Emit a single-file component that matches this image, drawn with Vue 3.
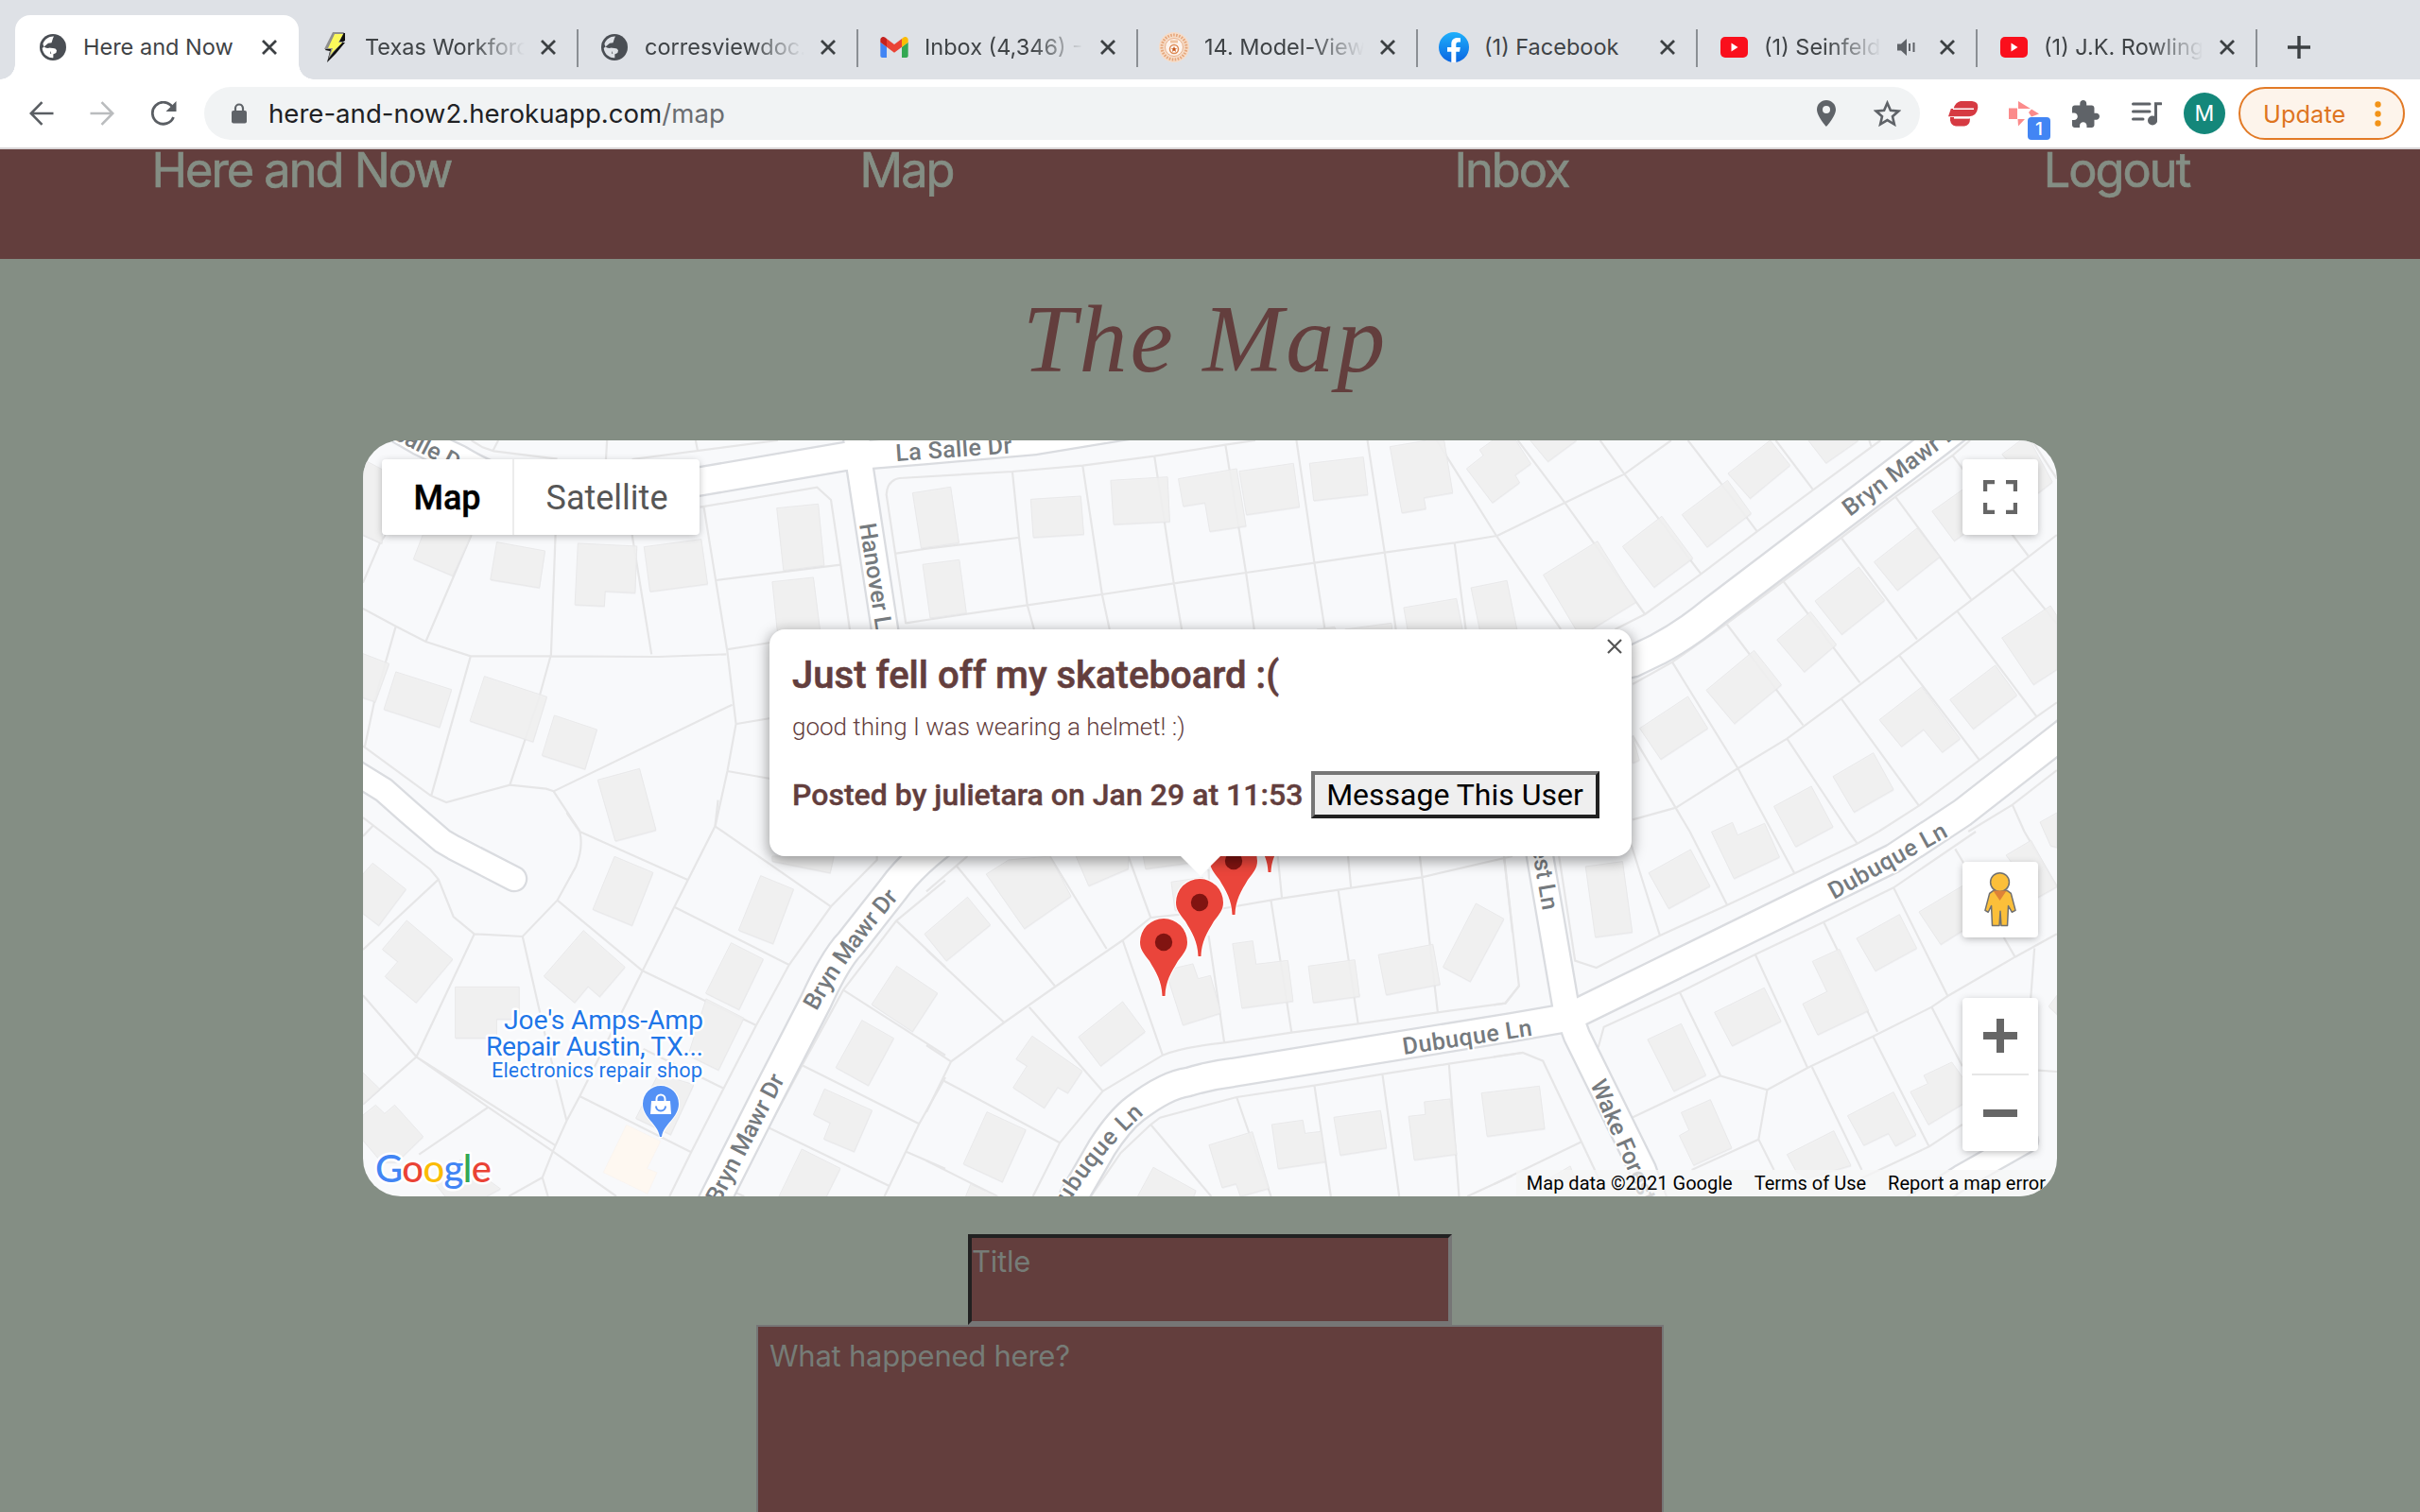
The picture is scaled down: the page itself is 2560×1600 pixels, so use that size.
<script setup>
const tabs = [
  { icon: 'globe', title: 'Here and Now', active: true },
  { icon: 'bolt', title: 'Texas Workforc' },
  { icon: 'globe', title: 'corresviewdoc.' },
  { icon: 'gmail', title: 'Inbox (4,346) -' },
  { icon: 'seal', title: '14. Model-View' },
  { icon: 'facebook', title: '(1) Facebook' },
  { icon: 'youtube', title: '(1) Seinfeld', audio: true },
  { icon: 'youtube', title: '(1) J.K. Rowling' },
]

const links = ['Here and Now', 'Map', 'Inbox', 'Logout']

// Each tile is digitised on its own grid, then scaled on to the map.
const tiles = [
  {
    x: -4, y: -6,
    lots: 'M300 18L330 40 360 52 530 77M372 18L358 50M663 18L660 78M900 18L905 48M730 78L1120 18M912 230L1225 167 1262 207 1288 413 1315 640M922 230L985 690 1008 918 985 1068 952 1245M955 462L1288 413M982 682L1100 660M1010 918L1100 900M985 1068L1100 1092M998 857L520 1132 590 1258M730 318L782 697M525 318L513 703M10 552L98 608 178 657 298 703 513 703 800 705 982 697M300 318L178 657M70 318L55 345 10 470M10 318L60 345M98 608L40 850 15 990M10 988L190 1145 233 1167 403 1112 500 1124 520 1132M298 703L193 1145M512 703L480 840 403 1112',
    houses: ['10,78 61,110 61,345 10,318', '170,318 300,318 250,448 145,395', '368,341 497,369 482,486 351,460', '585,345 743,354 738,502 658,497 656,544 577,540', '762,356 915,332 932,474 778,498', '1117,233 1228,220 1244,415 1135,431', '1105,467 1215,453 1235,640 1120,640', '10,695 80,727 43,848 10,835', '98,753 247,809 215,929 66,872', '335,767 502,832 465,975 296,909', '522,891 636,936 604,1062 489,1018', '638,1096 750,1060 794,1255 685,1290'],
  },
  {
    x: -4, y: 394,
    lots: 'M10 15L190 180 212 212 252 330 308 385 437 393 530 278 580 170Q600 110 590 60L555 0M590 60L877 212M960 -40L952 43 843 299 758 502 590 900 555 978 518 1075 490 1158 505 1218M952 43L1262 298M843 299L1150 483M1385 138L1385 150 1262 298 1150 483 1062 675 975 875 888 1078 830 1218M758 502L1062 675M530 278L758 502M437 393L500 720 555 978M212 212L10 435M308 385L153 775 10 925M10 580L153 775 345 935 160 1085M153 775L523 1055M518 1075L688 1218M345 935L518 1075M490 1158L400 1218M590 900L888 1078M760 750L975 875M10 75L38 40M1568 215L1437 343 1295 563 1185 802 1095 1000 1000 1218M1437 343L1568 490M1295 563L1568 770M1185 802L1498 988M1095 1000L1418 1185M1568 840L1498 988 1405 1218M1465 1077L1568 1130M1005 1205L1030 1218',
    houses: ['36,160 125,243 52,358 10,320 10,195', '127,342 250,465 152,603 69,520 103,473 62,434', '257,553 428,553 428,655 368,655 368,715 257,715', '683,139 786,190 730,358 625,307', '600,374 711,490 643,584 612,552 576,603 494,519', '1074,200 1162,243 1107,416 1015,373', '995,413 1081,465 1016,625 927,573', '928,591 1029,652 961,817 880,770', '1105,138 1270,138 1260,191 1105,154', '800,830 895,863 833,1022 740,970', '10,825 55,877 10,925', '44,928 68,955 95,928 171,1028 100,1110 60,1110 10,1040 10,960', '205,1180 270,1102 378,1194 340,1218 230,1218', '1438,487 1547,573 1480,695 1371,609', '1345,659 1430,716 1362,866 1275,809', '1245,877 1372,945 1324,1076 1243,1036 1260,985 1215,958', '1184,1068 1287,1129 1250,1218 1123,1218'],
    shop: '715,991 806,1043 770,1130 797,1142 771,1210 653,1142',
  },
  {
    x: 596, y: -6,
    lots: 'M-55 600L-107 190Q-105 145 -72 138L230 117 418 98 610 68 800 32 880 18M-81 377L0 362 245 327M-55 598L0 588M230 117L248 327 270 541 288 618M418 98L470 507 490 618M610 68L662 472 683 618M800 32L855 438 877 618M990 18L1038 407 1066 618M1180 18L1226 374 1256 618M0 588L270 541 470 507 662 472 855 438 1038 407 1226 374 1413 343 1525 321M1413 343L1443 618M1365 18L1525 321',
    houses: ['-37,185 65,166 87,343 -14,360', '-10,412 88,397 107,566 10,582', '279,205 413,195 421,316 286,326', '493,145 645,134 651,276 501,285', '674,140 830,108 855,290 758,307 745,216 687,227', '837,116 982,91 998,229 856,254', '1025,91 1169,71 1181,190 1036,209', '1240,38 1340,18 1385,18 1408,184 1331,200 1336,235 1272,248', '1445,108 1490,66 1480,48 1515,18 1577,18 1617,92 1575,128 1587,152 1514,216', '1457,486 1553,463 1580,618 1480,618', '1277,549 1418,520 1434,618 1287,618', '1120,618 1244,598 1246,618', '1045,618 1092,610 1095,618'],
  },
  {
    x: 596, y: 394,
    lots: 'M0 250L110 138M80 168L345 552M330 138L482 432M540 138L600 333 740 315M1568 138L1325 205 950 272 740 315M600 333L525 405 345 552 208 666 66 790 42 848 0 950M0 435L208 666M0 738L66 790M42 848L357 1048M0 1105L190 1218M275 617L472 884M525 405L632 770M755 180L760 310M755 390L797 730M922 280L977 698M940 138L951 270M1128 138L1136 238M1102 248L1155 670M1320 138L1368 634M1545 138L1568 380M285 1218L357 1048 472 884 632 770Q680 745 797 730L977 698 1155 670 1368 634 1548 605 1585 550M440 1218L520 1080 600 990 625 968 830 903 1038 866 1220 830 1398 797 1595 762M600 990L762 1218M830 903L922 1218M1038 866L1082 1218M1220 830L1265 1218M1398 797L1425 1218M1447 1218L1568 1152',
    houses: ['110,268 171,356 53,470 -5,385', '220,150 330,138 387,265 262,368 160,195', '400,138 540,138 540,178 434,232', '580,138 700,138 700,160 586,178', '655,220 740,205 740,300 665,310', '650,540 640,500 713,480 727,527 760,517 788,636 686,674', '819,416 873,407 882,481 967,469 981,598 844,620', '1022,487 1146,467 1159,583 1035,603', '1209,451 1355,418 1374,545 1230,578', '1470,288 1545,337 1455,536 1382,490', '525,600 585,695 466,804 407,712', '283,709 417,820 378,890 351,872 315,937 232,873 269,804 240,782', '162,950 266,1007 203,1172 99,1115', '118,1180 190,1218 105,1218', '607,1126 721,1200 715,1218 565,1218', '756,1055 872,1013 917,1192 840,1218 828,1178 791,1190', '924,990 1007,976 1013,1018 1056,1012 1067,1108 941,1130', '1090,967 1215,946 1231,1064 1107,1087', '1332,918 1401,909 1419,1084 1305,1102 1290,964 1335,958', '1485,890 1640,868 1654,1003 1500,1027'],
  },
  {
    x: 1196, y: -6,
    lots: 'M8 322L192 215 350 125 475 18M65 18L190 215 405 570M285 18L350 125 555 442M520 18L612 160 705 307M755 18L855 175M1005 18L1010 36M325 618L405 570 555 442 705 307 855 175 1035 18M8 322L180 618M372 792L478 722 623 600 775 465 930 327 1075 197 1228 66 1275 18M478 722L655 1062 745 1260M623 600L828 922M775 465L980 787M930 327L1133 650M1075 197L1277 522M1228 66L1430 384M372 1222L488 1184 650 1062 785 965 930 838 1085 700 1240 560 1388 427 1507 318M372 955L525 1260M785 965L950 1260M930 838L1138 1178M1085 700L1300 1033M1240 560L1453 895M1388 427L1507 600M1440 18L1507 140M1030 1260L1138 1178 1300 1033 1453 895 1507 850M1270 1260L1388 1175 1507 1065M1388 1175L1420 1260',
    houses: ['98,18 222,18 145,85', '740,18 793,97 686,202 627,123', '842,18 976,18 889,90', '626,145 689,250 571,357 504,254', '450,259 533,392 429,484 345,355', '278,338 380,532 262,618 220,618 133,445', '1360,62 1410,18 1435,18 1495,150 1457,185', '1254,175 1173,243 1232,337 1300,280', '1133,297 1193,388 1080,494 1018,404', '977,420 1046,526 931,634 860,528', '848,562 917,666 831,753 758,651', '697,685 770,794 644,917 569,811', '520,831 573,932 447,1030 391,932', '1145,801 1248,965 1200,1008 1150,936 1091,990 1032,905', '1342,732 1400,827 1283,934 1221,841', '1490,543 1507,575 1507,745 1444,793 1360,645', '1016,1010 1070,1126 964,1198 908,1085', '850,1116 908,1245 808,1308 750,1180', '372,960 390,1033 372,1042'],
  },
  {
    x: 1196, y: 394,
    lots: 'M365 90L445 390M525 60L625 293M745 60L805 193M950 60L973 98M175 138L218 470 275 492 445 390 625 293 805 193 973 98 1030 60M28 138L68 550 32 605 0 610M1290 60L1070 238 883 347 700 450 498 570 295 680 280 745M1235 115L1260 165M1420 60L1507 235M883 347L1027 695M700 450L840 810M498 570L607 835M1070 238L1215 582M1365 396L1395 458M370 968L607 835 732 880 840 810 1015 710 1172 617 1215 582 1395 458 1507 385M1447 430L1437 590M1172 617L1254 805M1015 710L1165 1060M852 808L985 1134M732 880L709 1037 750 1134M530 1134L709 1037M985 1160L1165 1060 1254 990M1457 818L1507 822M0 775L78 762 132 788 235 1045 285 1170M235 1045L0 1180',
    houses: ['639,31 653,71 725,34 765,141 643,209 583,61', '527,117 579,233 468,304 415,191', '246,171 345,155 371,379 272,395', '1438,88 1507,235 1457,268 1371,135', '1300,200 1138,315 1196,418 1300,340', '1086,323 1132,430 1021,502 971,399', '925,433 1003,628 867,705 827,607 892,568 853,472', '724,556 769,662 638,740 591,634', '502,670 568,833 482,884 412,720', '580,911 637,1064 535,1119 497,1025 523,1008 502,952', '910,1010 956,1120 840,1160 810,1140 785,1085', '1070,887 1130,1023 1075,1058 1056,1018 990,1056 947,962', '1226,792 1290,900 1163,990 1115,886 1162,860 1151,834', '1462,30 1507,0 1507,110 1490,105', '1507,580 1485,615 1507,640', '150,1160 205,1122 225,1180'],
  },
]

const roads = [
  { w: 28, d: 'M-20 -46L59 0 101 20Q150 50 210 57 270 60 353 44L510 17 596 10 711 0 820 -18' },
  { w: 26, d: 'M522 -4L526 31 552 200 565 300' },
  { w: 31, d: 'M368 812L374 800 426 697 479 594Q500 548 516 532L560 476Q586 440 640 405L1343 234 1370 221Q1400 205 1429 181L1667 0 1690 -18' },
  { w: 28, d: 'M746 814L752 800 782 748Q800 720 817 707 850 682 873 679 895 672 920 669L1216 621 1274 611 1619 442 1692 394 1810 302' },
  { w: 26, d: 'M1225 310L1245 440 1272 597 1284 630 1354 772 1366 806' },
  { w: 24, d: 'M-20 343L-4 354 22 370 49 394 84 424 96 431 160 464' },
  { w: 24, d: 'M1640 812L1690 780 1759 741' },
]

const streetLabels = [
  { at: 'translate(29 -3) rotate(27)', text: 'Salle Dr' },
  { at: 'translate(564 22) rotate(-4)', text: 'La Salle Dr', len: 123 },
  { at: 'translate(525 89) rotate(81)', text: 'Hanover Ln' },
  { at: 'translate(377 809) rotate(-62.5)', text: 'Bryn Mawr Dr', len: 150 },
  { at: 'translate(1573 81) rotate(-37)', text: 'Bryn Mawr Dr', len: 154 },
  { at: 'translate(1101 650) rotate(-8.5)', text: 'Dubuque Ln', len: 138 },
  { at: 'translate(1556 486) rotate(-29)', text: 'Dubuque Ln', len: 139 },
  { at: 'translate(1298 681) rotate(66.5)', text: 'Wake Forest Ln' },
]
</script>

<template>
  <div class="screen">
    <header class="tabstrip">
      <div v-for="(t, i) in tabs" :key="i" class="tab" :class="{ active: t.active }">
        <span class="favicon">
          <svg v-if="t.icon === 'globe'" width="28" height="28" viewBox="0 0 28 28">
            <circle cx="14" cy="14" r="14" fill="#4a4e54" />
            <g :fill="t.active ? '#fff' : '#dee1e6'">
              <path d="M15 2.600C10 2.300 5 5.500 3.400 10.500 4 14 7 15.500 10 15L13 17.800H11V20.500L14.200 21.500V25.200C10 25.500 3.500 22.500 2.700 15L9 9.800 12.500 9.200C13.500 7 13.500 5 15 2.600Z" />
              <path d="M14.200 21.600C17.500 20.500 18.500 17.500 16.500 15.600L13 15 14 18ZM14.200 25.200V21.400L17.300 20 18 17.500C17.500 15.800 16 15 14 15L9.500 14.500" />
            </g>
          </svg>
          <svg v-else-if="t.icon === 'bolt'" width="24" height="34" viewBox="0 0 24 34">
            <path d="M11 2H23V10L20 12H23L13 24 4 33 7 21 2 20 7 11Z" fill="#111" />
            <path d="M10 1H22L17 11H21L11 22 5 30 8 19H1Z" fill="#8f8f8f" />
            <path d="M12 3H21L16 12H20L10 22 7 26 10 18H5Z" fill="#fbf95a" />
          </svg>
          <svg v-else-if="t.icon === 'gmail'" width="30" height="22" viewBox="52 42 88 66">
            <path fill="#4285f4" d="M58 108h14V74L52 59v43c0 3.320 2.690 6 6 6" />
            <path fill="#34a853" d="M120 108h14c3.320 0 6-2.690 6-6V59l-20 15" />
            <path fill="#fbbc04" d="M120 48v26l20-15v-8c0-7.420-8.470-11.650-14.400-7.200" />
            <path fill="#ea4335" d="M72 74V48l24 18 24-18v26L96 92" />
            <path fill="#c5221f" d="M52 51v8l20 15V48l-5.600-4.200c-5.940-4.450-14.400-.22-14.400 7.200" />
          </svg>
          <svg v-else-if="t.icon === 'seal'" width="32" height="32" viewBox="0 0 32 32">
            <circle cx="16" cy="16" r="16" fill="#f6dcc8" />
            <circle cx="16" cy="16" r="13" fill="none" stroke="#e6a67a" stroke-width="3" stroke-dasharray="1.600 1.400" />
            <circle cx="16" cy="16" r="9.500" fill="#fdf3ec" stroke="#e9b18b" />
            <path d="M12 8.500H20V11.500H12Z" fill="#efc3a1" />
            <circle cx="16" cy="18" r="4.500" fill="#fff" stroke="#dd8a54" stroke-width="1.500" />
            <path d="M16 15l1 2.200h2.200l-1.800 1.400.7 2.300-2.100-1.400-2.100 1.400.7-2.300-1.800-1.400H15Z" fill="#c8581a" />
          </svg>
          <svg v-else-if="t.icon === 'facebook'" width="32" height="32" viewBox="0 0 32 32">
            <defs><linearGradient id="fb" x1="0" y1="0" x2="0" y2="1"><stop offset="0" stop-color="#1fb0fb" /><stop offset="1" stop-color="#0a65e2" /></linearGradient></defs>
            <circle cx="16" cy="16" r="16" fill="url(#fb)" />
            <path d="M13.300 32V20.800H9V16H13.300V12.500C13.300 8.200 15.800 6 19.600 6 21.400 6 23 6.300 23 6.300V10.400H21C18.900 10.400 18.300 11.700 18.300 13V16H22.800L22 20.800H18.300V32Z" fill="#fff" />
          </svg>
          <svg v-else width="29" height="22" viewBox="0 0 29 22">
            <rect width="29" height="22" rx="5" fill="#fa0f1c" /><path d="M11.500 6.500L18.500 11 11.500 15.500Z" fill="#fff" />
          </svg>
        </span>
        <span class="tab-title">{{ t.title }}</span>
        <svg v-if="t.audio" class="speaker" width="19" height="18" viewBox="0 0 19 18">
          <path d="M0 5.500H4L10 0V18L4 12.500H0Z" fill="#5f6368" /><path d="M13 5V13M17.500 4V14" stroke="#5f6368" stroke-width="2" />
        </svg>
        <svg class="close" width="18" height="18" viewBox="0 0 18 18"><path d="M2 2L16 16M16 2L2 16" stroke="#3c4043" stroke-width="2.800" /></svg>
      </div>
      <svg class="plus" width="24" height="24" viewBox="0 0 24 24"><path d="M12 0V24M0 12H24" stroke="#3c4043" stroke-width="3.400" /></svg>
    </header>

    <div class="toolbar">
      <svg width="26" height="26" viewBox="0 0 26 26"><path d="M13.500 1.200L1.800 13 13.500 24.800M2 13H25.500" fill="none" stroke="#5a5e63" stroke-width="2.600" /></svg>
      <svg width="26" height="26" viewBox="0 0 26 26"><path d="M12.500 1.200L24.200 13 12.500 24.800M24 13H.5" fill="none" stroke="#babcbe" stroke-width="2.600" /></svg>
      <svg width="28" height="26" viewBox="0 0 28 26"><path d="M23.500 6.500A11.500 11.500 0 1 0 24.500 17" fill="none" stroke="#5a5e63" stroke-width="2.800" /><path d="M27.500 0V11H16.500Z" fill="#5a5e63" /></svg>
      <div class="omnibox">
        <svg width="16" height="22" viewBox="0 0 16 22"><rect y="8" width="16" height="13.500" rx="2" fill="#5f6368" /><path d="M4 9V5.500A4 4 0 0 1 12 5.500V9" fill="none" stroke="#5f6368" stroke-width="2.200" /></svg>
        <span class="url">here-and-now2.herokuapp.com<i>/map</i></span>
        <svg class="pin" width="20" height="28" viewBox="0 0 20 28"><path fill-rule="evenodd" d="M10 0C4.400 0 0 4.400 0 10 0 17 10 28 10 28S20 17 20 10C20 4.400 15.600 0 10 0ZM10 6A4 4 0 1 1 10 14 4 4 0 1 1 10 6Z" fill="#5f6368" /></svg>
        <svg width="29" height="28" viewBox="0 0 29 28"><path d="M14.500 3L17.900 10.800 26.400 11.600 20 17.200 21.900 25.500 14.500 21.100 7.100 25.500 9 17.200 2.600 11.600 11.100 10.800Z" fill="none" stroke="#5f6368" stroke-width="2.600" /></svg>
      </div>
      <svg class="ext red" width="32" height="27" viewBox="0 0 32 27">
        <path d="M13 0H25Q32 .5 31.300 7 30 16 22 16.300H0L2.800 8H5.500Q7.500 1 13 0Z" fill="#d63a42" />
        <path d="M2 18.500H23Q23 26 17 26.500H8Q2 26 2 18.500Z" fill="#d63a42" />
        <path d="M5 8.200H27M3.500 17.500H22" stroke="#fff" stroke-width="1.400" />
        <path d="M2 17H6V21H2Z" fill="#d63a42" />
      </svg>
      <div class="ext badge-host">
        <svg width="33" height="27" viewBox="0 0 33 27"><path d="M10 0L23 8H10ZM0 7.500H9V19H0ZM9.500 19H17L10 26.500ZM24 8.500L32 13.500 24 16.500 21 12Z" fill="#fb8b8b" /></svg>
        <b class="badge">1</b>
      </div>
      <svg class="ext puzzle" width="29" height="29" viewBox="2 1 21 21"><path d="M20.500 11H19V7c0-1.100-.9-2-2-2h-4V3.500C13 2.120 11.880 1 10.500 1S8 2.120 8 3.500V5H4c-1.100 0-1.990.9-1.990 2v3.800H3.500c1.490 0 2.700 1.210 2.700 2.700s-1.210 2.700-2.700 2.700H2V20c0 1.100.9 2 2 2h3.800v-1.500c0-1.490 1.210-2.700 2.700-2.700 1.490 0 2.700 1.210 2.700 2.700V22H17c1.100 0 2-.9 2-2v-4h1.500c1.380 0 2.500-1.120 2.500-2.500S21.880 11 20.500 11z" fill="#5f6368" /></svg>
      <svg class="ext" width="32" height="25" viewBox="0 0 32 25"><path d="M1.500 2H19M1.500 10H19M1.500 18H12" stroke="#5f6368" stroke-width="3" stroke-linecap="round" /><path d="M25.500 20V1.800H31" fill="none" stroke="#5f6368" stroke-width="3" stroke-linecap="round" /><circle cx="22" cy="19.500" r="5" fill="#5f6368" /></svg>
      <span class="avatar">M</span>
      <span class="update">Update<svg width="7" height="27" viewBox="0 0 7 27"><g fill="#f29318"><circle cx="3.500" cy="3.500" r="3.200" /><circle cx="3.500" cy="13.500" r="3.200" /><circle cx="3.500" cy="23.500" r="3.200" /></g></svg></span>
    </div>

    <main class="page">
      <nav class="nav"><a v-for="l in links" :key="l">{{ l }}</a></nav>
      <h1>The Map</h1>

      <section class="map">
        <svg class="canvas" width="1792" height="800" viewBox="0 0 1792 800">
          <defs>
            <path id="mawr" d="M480 604Q510 548 571 479" />
            <path id="dub" d="M727 847Q757 775 827 712" />
            <g id="marker">
              <path d="M23.500 82C23 66 17 57 10 45 4 37 0 33 0 25A25 25 0 0 1 50 25C50 33 46 37 40 45 33 57 27 66 26.500 82Z" fill="#ea453b" stroke="#fff" stroke-width="2" paint-order="stroke" />
              <circle cx="25" cy="25" r="9.200" fill="#811411" />
            </g>
          </defs>
          <g v-for="(t, i) in tiles" :key="i" :transform="`translate(${t.x} ${t.y}) scale(.39541 .33333)`">
            <path class="lots" :d="t.lots" />
            <polygon v-for="h in t.houses" :key="h" class="house-edge" :points="h" transform="translate(1 4)" />
            <polygon v-for="h in t.houses" :key="h + 'f'" class="house" :points="h" />
            <polygon v-if="t.shop" :points="t.shop" fill="#fef8f1" stroke="#f6efe8" />
          </g>
          <g class="casing"><path v-for="r in roads" :key="r.d" :d="r.d" :stroke-width="r.w + 4.6" /></g>
          <g class="surface"><path v-for="r in roads" :key="r.d" :d="r.d" :stroke-width="r.w" /></g>

          <g class="street">
            <text v-for="(s, i) in streetLabels" :key="i" :transform="s.at" :textLength="s.len">{{ s.text }}</text>
            <text textLength="149"><textPath href="#mawr">Bryn Mawr Dr</textPath></text>
            <text text-anchor="end" letter-spacing="1"><textPath href="#dub" startOffset="100%">Dubuque Ln</textPath></text>
            <text text-anchor="end" transform="translate(1248 498) rotate(80)">Wake Forest Ln</text>
          </g>

          <g class="poi" text-anchor="end">
            <text x="360" y="623" textLength="211">Joe's Amps-Amp</text>
            <text x="360" y="651" textLength="230">Repair Austin, TX...</text>
            <text x="359" y="674" textLength="223" class="kind">Electronics repair shop</text>
          </g>
          <g transform="translate(296 683)">
            <path d="M18 54C16 40 0 34 0 19A19 19 0 0 1 38 19C38 34 22 40 20 54Z" fill="#5491f5" stroke="#fff" stroke-width="2" paint-order="stroke" />
            <path d="M9 16H29L30 30H8Z" fill="#fff" /><path d="M14.500 17V14A4.500 4.500 0 0 1 23.500 14V17" fill="none" stroke="#fff" stroke-width="2" /><path d="M14 21.500A5 5 0 0 0 24 21.500" fill="none" stroke="#5491f5" stroke-width="2" />
          </g>

          <path d="M957.500 457C957 449 956 445 953 438H965C962 445 961 449 960.500 457Z" fill="#ea453b" stroke="#fff" stroke-width="2" paint-order="stroke" />
          <g>
            <use href="#marker" x="896" y="420" />
            <use href="#marker" x="860" y="464" />
            <use href="#marker" x="822" y="506" />
          </g>
          <text class="google" x="13" y="785" textLength="123"><tspan fill="#4285f4">G</tspan><tspan fill="#ea4335">o</tspan><tspan fill="#fbbc05">o</tspan><tspan fill="#4285f4">g</tspan><tspan fill="#34a853">l</tspan><tspan fill="#ea4335">e</tspan></text>
        </svg>

        <div class="types"><b>Map</b><span>Satellite</span></div>
        <div class="ctl fullscreen">
          <svg width="36" height="36" viewBox="0 0 36 36"><path d="M2 12V2H12M24 2H34V12M34 24V34H24M12 34H2V24" fill="none" stroke="#666" stroke-width="4.400" /></svg>
        </div>
        <div class="ctl pegman">
          <svg width="34" height="62" viewBox="0 0 36 62">
            <path d="M10 21H26L30 24 35 43 31 45 27 38 26 60H19L18 44 17 60H9L8 38 4.500 45 1 43 6 24Z" fill="#fbbf3a" stroke="#707070" stroke-width="1.600" stroke-linejoin="round" />
            <circle cx="17.500" cy="11.500" r="10.500" fill="#fbbf3a" stroke="#707070" stroke-width="1.600" />
            <path d="M10 21H25L17.500 32Z" fill="#de8237" />
          </svg>
        </div>
        <div class="ctl zoom">
          <svg width="36" height="36" viewBox="0 0 36 36"><path d="M14 0H22V14H36V22H22V36H14V22H0V14H14Z" fill="#666" /></svg>
          <hr>
          <svg width="36" height="36" viewBox="0 0 36 36"><path d="M0 14H36V22H0Z" fill="#666" /></svg>
        </div>
        <div class="legal"><span>Map data ©2021 Google</span><span>Terms of Use</span><span>Report a map error</span></div>

        <article class="popup">
          <svg class="dismiss" width="16" height="16" viewBox="0 0 16 16"><path d="M1 1L15 15M15 1L1 15" stroke="#555" stroke-width="2.200" /></svg>
          <h2>Just fell off my skateboard :(</h2>
          <p>good thing I was wearing a helmet! :)</p>
          <div class="posted"><h3>Posted by julietara on Jan 29 at 11:53</h3><button>Message This User</button></div>
          <svg class="tail" width="44" height="22" viewBox="0 0 44 22"><path d="M0 0H44L22 22Z" fill="#fff" /></svg>
        </article>
      </section>

      <form>
        <div class="title-input">Title</div>
        <div class="body-input">What happened here?</div>
      </form>
    </main>
  </div>
</template>

<style>
body { margin: 0; }
</style>

<style scoped>
* { box-sizing: border-box; }
.screen { width: 2560px; height: 1600px; overflow: hidden; display: flex; flex-direction: column; background: #848e84; font-family: Inter, "Liberation Sans", sans-serif; }
svg { display: block; flex: none; }

.tabstrip { height: 84px; flex: none; display: flex; align-items: flex-end; padding-left: 16px; background: #dee1e6; }
.tab { position: relative; width: 296px; height: 68px; display: flex; align-items: center; padding: 0 22px 0 23px; flex: none; }
.tab::after { content: ""; position: absolute; right: -1px; top: 15px; width: 2px; height: 40px; background: #8b8f94; }
.tab.active { width: 300px; margin-right: -1px; padding-left: 24px; background: #fff; border-radius: 16px 16px 0 0; }
.tab.active::after { top: auto; bottom: 0; right: -16px; width: 16px; height: 16px; background: radial-gradient(circle at 100% 0, transparent 15.5px, #fff 16px); }
.tab.active::before { content: ""; position: absolute; bottom: 0; left: -16px; width: 16px; height: 16px; background: radial-gradient(circle at 0 0, transparent 15.5px, #fff 16px); }
.favicon { width: 32px; display: flex; justify-content: center; flex: none; }
.tab-title { margin-left: 16px; flex: 1; min-width: 0; overflow: hidden; white-space: nowrap; font-size: 23.5px; line-height: 34px; color: #3f4346; -webkit-mask-image: linear-gradient(to right, #000 calc(100% - 56px), transparent); mask-image: linear-gradient(to right, #000 calc(100% - 56px), transparent); }
.tab.active .tab-title, .tab:nth-child(6) .tab-title { -webkit-mask-image: none; mask-image: none; }
.speaker { margin-left: 16px; }
.close { margin-left: 16px; }
.speaker + .close { margin-left: 25px; }
.plus { margin: 0 0 22px 33px; }

.toolbar { height: 74px; flex: none; display: flex; align-items: center; padding: 0 16px 0 31px; background: #fff; border-bottom: 2px solid #d9d5d7; }
.toolbar > svg:nth-child(2) { margin-left: 38px; }
.toolbar > svg:nth-child(3) { margin-left: 38px; }
.omnibox { width: 1815px; height: 56px; margin-left: 29px; padding: 0 20px 0 29px; border-radius: 28px; background: #f1f3f4; display: flex; align-items: center; flex: none; }
.url { margin-left: 23px; font-size: 27.6px; line-height: 34px; color: #202124; white-space: nowrap; }
.url i { font-style: normal; color: #6a6d71; }
.pin { margin: 0 40px 0 auto; }
.ext { flex: none; margin-left: 34px; }
.ext.red { margin-left: 30px; }
.badge-host { position: relative; margin-left: 32px; }
.badge { position: absolute; left: 20px; top: 17px; width: 24px; height: 24px; border-radius: 4px; background: #4285f4; color: #fff; font: 500 19px/25px Inter, sans-serif; text-align: center; }
.avatar { width: 44px; height: 44px; margin-left: auto; border-radius: 50%; background: #14877a; color: #fff; font-size: 23px; line-height: 44px; text-align: center; flex: none; }
.update { width: 176px; height: 56px; margin-left: 14px; padding: 0 23px 0 24px; border: 2px solid #e27a26; border-radius: 28px; background: #fdf4eb; color: #de7420; font-size: 25.3px; letter-spacing: .1px; display: flex; align-items: center; justify-content: space-between; flex: none; }

.page { display: flex; flex-direction: column; align-items: center; }
.nav { width: 2560px; height: 116px; background: #633e3d; display: flex; }
.nav a { width: 640px; text-align: center; font-size: 50.5px; line-height: 60px; margin-top: -8px; letter-spacing: -2px; text-indent: -2px; color: #848e84; -webkit-text-stroke: .7px #848e84; }
h1 { height: 192px; margin: 0; padding-top: 30px; font: italic 400 102px/110px "Liberation Serif", serif; letter-spacing: 3px; color: #633e3d; transform: translateX(-5px); }

.map { position: relative; width: 1792px; height: 800px; border-radius: 40px; overflow: hidden; background: #f8f9fb; font-family: Roboto, sans-serif; }
.lots { fill: none; stroke: #e6e6e7; stroke-width: 2.200px; vector-effect: non-scaling-stroke; }
.house { fill: #f0f0f0; fill-opacity: .85; stroke: #e9e9ea; stroke-width: 1px; vector-effect: non-scaling-stroke; }
.house-edge { fill: #e0e1e4; fill-opacity: .4; }
.casing path, .surface path { fill: none; stroke-linejoin: round; stroke-linecap: round; }
.casing { stroke: #dadce0; }
.surface { stroke: #fff; }
.street { font: 500 25px Roboto, sans-serif; fill: #757a7e; stroke: #fff; stroke-width: 4px; paint-order: stroke; stroke-linejoin: round; }
.poi { font: 400 28.500px Roboto, sans-serif; fill: #1f76e8; stroke: #fff; stroke-width: 5px; paint-order: stroke; stroke-linejoin: round; }
.kind { font-size: 22px; }
.google { font: 500 40px Lato, sans-serif; stroke: #fff; stroke-width: 5px; paint-order: stroke; stroke-linejoin: round; }

.types { position: absolute; left: 20px; top: 20px; width: 336px; height: 80px; border-radius: 4px; background: #fff; box-shadow: 0 2px 8px -1px rgba(0, 0, 0, .3); display: flex; font-size: 36px; line-height: 83px; text-align: center; }
.types b { width: 140px; font-weight: 500; color: #000; border-right: 2px solid #ececec; -webkit-text-stroke: .4px #000; }
.types span { flex: 1; color: #565656; }
.ctl { position: absolute; left: 1692px; width: 80px; border-radius: 4px; background: #fff; box-shadow: 0 2px 8px -1px rgba(0, 0, 0, .3); display: flex; flex-direction: column; align-items: center; }
.fullscreen { top: 20px; height: 80px; justify-content: center; }
.pegman { top: 446px; height: 80px; justify-content: center; }
.zoom { top: 590px; height: 162px; padding: 22px 0; justify-content: space-between; }
.zoom hr { width: 60px; height: 2px; margin: 0; border: 0; background: #e6e6e6; }
.legal { position: absolute; right: 0; bottom: 0; height: 28px; padding: 0 12px 0 11px; background: rgba(245, 245, 245, .75); display: flex; gap: 23px; font-size: 20px; line-height: 28px; color: #000; white-space: nowrap; }

.popup { position: absolute; left: 430px; top: 200px; width: 912px; height: 240px; padding: 24px; border-radius: 16px; background: #fff; box-shadow: 0 4px 14px 2px rgba(0, 0, 0, .35); color: #633e3d; }
.dismiss { position: absolute; right: 10px; top: 10px; }
.tail { position: absolute; left: 434px; top: 239px; }
h2 { margin: 1px 0 0; font: 500 40px/48px Roboto, sans-serif; letter-spacing: .03px; -webkit-text-stroke: .6px #633e3d; }
p { margin: 12px 0 0; font: 300 26px/36px Roboto, sans-serif; }
.posted { display: flex; align-items: center; margin-top: 29px; gap: 9px; white-space: nowrap; }
h3 { margin: 0; font: 500 32px/50px Roboto, sans-serif; letter-spacing: .03px; -webkit-text-stroke: .4px #633e3d; }
button { width: 305px; height: 50px; padding: 0 2px 0 0; border: 4px solid; border-color: #767676 #212121 #212121 #767676; background: #efefef; color: #000; font: 400 32px/42px Roboto, sans-serif; }

form { display: flex; flex-direction: column; align-items: center; margin-top: 40px; color: #767c77; font-size: 31px; letter-spacing: -.25px; }
.title-input { width: 512px; height: 96px; border: 4px solid; border-color: #212121 #767676 #767676 #212121; background: #633e3d; padding-top: 6px; line-height: 38px; }
.body-input { width: 960px; height: 300px; border: 2px solid #767676; background: #633e3d; padding: 12px; line-height: 38px; }
</style>
